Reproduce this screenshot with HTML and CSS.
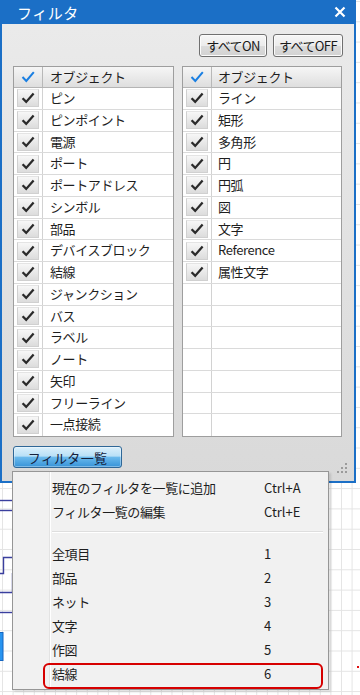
FILE: index.html
```html
<!DOCTYPE html>
<html lang="ja">
<head>
    <meta charset="UTF-8">
    <meta name="viewport" content="width=device-width, initial-scale=1.0">
    <title>フィルタ</title>
    <link rel="stylesheet" href="styles.css">
</head>
<body>
    <svg class="wires" width="360" height="695" viewBox="0 0 360 695">
        <path d="M0 500.5 H14" />
        <path d="M0 510.5 H14" />
        <path d="M0 573.5 H3.5 V557.5 H14" />
        <path d="M12.5 573 V592.5 H0" />
        <path d="M0 612.5 H14" />
        <rect class="blk" x="-1" y="632.5" width="4" height="28" />
        <rect class="dot" x="357" y="666" width="2" height="2" />
    </svg>

    <div class="window">
        <div class="titlebar">
            <span class="title">フィルタ</span>
            <svg class="close" width="12" height="12" viewBox="0 0 12 12">
                <path d="M1.5 1.5 L10.5 10.5 M10.5 1.5 L1.5 10.5" />
            </svg>
        </div>

        <div class="body">
            <div class="toolbar">
                <button class="btn">すべてON</button>
                <button class="btn">すべてOFF</button>
            </div>

            <div class="lists">
                <div class="list list-left" id="leftList">
                    <div class="row head">
                        <div class="chk"><svg class="bluechk" width="14" height="12" viewBox="0 0 14 12"><path d="M1.5 6 L5.3 10 L12.8 1.2" /></svg></div>
                        <div class="name">オブジェクト</div>
                    </div>
                </div>
                <div class="list list-right" id="rightList">
                    <div class="row head">
                        <div class="chk"><svg class="bluechk" width="14" height="12" viewBox="0 0 14 12"><path d="M1.5 6 L5.3 10 L12.8 1.2" /></svg></div>
                        <div class="name">オブジェクト</div>
                    </div>
                </div>
            </div>

            <button class="btn-blue">フィルタ一覧</button>

            <svg class="grip" width="12" height="12" viewBox="0 0 12 12">
                <rect x="9" y="1" width="2" height="2" />
                <rect x="5" y="5" width="2" height="2" />
                <rect x="9" y="5" width="2" height="2" />
                <rect x="1" y="9" width="2" height="2" />
                <rect x="5" y="9" width="2" height="2" />
                <rect x="9" y="9" width="2" height="2" />
            </svg>
        </div>
    </div>

    <div class="menu">
        <div class="item"><span>現在のフィルタを一覧に追加</span><span class="key">Ctrl+A</span></div>
        <div class="item"><span>フィルタ一覧の編集</span><span class="key">Ctrl+E</span></div>
        <div class="sep"></div>
        <div class="item"><span>全項目</span><span class="key">1</span></div>
        <div class="item"><span>部品</span><span class="key">2</span></div>
        <div class="item"><span>ネット</span><span class="key">3</span></div>
        <div class="item"><span>文字</span><span class="key">4</span></div>
        <div class="item"><span>作図</span><span class="key">5</span></div>
        <div class="item"><span>結線</span><span class="key">6</span></div>
        <div class="mark"></div>
    </div>

    <script>
        const leftItems = ['ピン', 'ピンポイント', '電源', 'ポート', 'ポートアドレス', 'シンボル', '部品',
            'デバイスブロック', '結線', 'ジャンクション', 'バス', 'ラベル', 'ノート', '矢印', 'フリーライン', '一点接続'];
        const rightItems = ['ライン', '矩形', '多角形', '円', '円弧', '図', '文字', 'Reference', '属性文字'];
        const tick = '<svg width="14" height="12" viewBox="0 0 14 12"><path d="M1.6 6.2 L5.2 9.9 L12.6 1.6" /></svg>';

        function fillList(id, items) {
            const list = document.getElementById(id);
            for (let i = 0; i < 16; i++) {
                const row = document.createElement('div');
                row.className = 'row';
                if (i < items.length) {
                    row.innerHTML = `<div class="chk"><span class="box">${tick}</span></div><div class="name">${items[i]}</div>`;
                } else {
                    row.innerHTML = '<div class="chk"></div><div class="name"></div>';
                }
                list.appendChild(row);
            }
        }

        fillList('leftList', leftItems);
        fillList('rightList', rightItems);
    </script>
</body>
</html>
```

FILE: styles.css
```css
body {
    margin: 0;
    width: 360px;
    height: 695px;
    position: relative;
    overflow: hidden;
    font-family: "Noto Sans CJK JP", "Noto Sans", sans-serif;
    font-size: 13px;
    color: #1e1e1e;
    background-color: #fff;
    background-image:
        linear-gradient(to right, #e4e4e4 1px, transparent 1px),
        linear-gradient(to bottom, #e4e4e4 1px, transparent 1px);
    background-size: 10.6px 20.3px;
    background-position: 2px 1px;
}

.wires {
    position: absolute;
    left: 0;
    top: 0;
}

.wires path {
    fill: none;
    stroke: #3a3f9e;
    stroke-width: 1.4;
}

.wires .blk {
    fill: #2894f0;
    stroke: #1565c0;
    stroke-width: 1;
}

.wires .dot {
    fill: #e01010;
}

.window {
    position: relative;
    width: 356px;
    height: 483px;
    box-sizing: border-box;
    border: 2px solid #1b6fc6;
    border-top: 0;
    background: linear-gradient(#ebebeb, #d9d9d9);
    display: flex;
    flex-direction: column;
}

.titlebar {
    height: 24px;
    margin: 0 -2px;
    background: #1b6fc6;
    color: #fff;
    display: flex;
    align-items: center;
    justify-content: space-between;
    padding: 0 10px 0 17px;
}

.title {
    font-size: 15px;
    letter-spacing: 0.5px;
}

.close path {
    stroke: #fff;
    stroke-width: 2.2;
}

.body {
    position: relative;
    flex: 1;
    padding: 10px 12px 0 11px;
}

.toolbar {
    display: flex;
    justify-content: flex-end;
    gap: 6px;
    margin-right: -1px;
}

.btn {
    height: 23px;
    padding: 0;
    font-family: inherit;
    font-size: 13px;
    color: #1a1a1a;
    letter-spacing: -0.6px;
    white-space: nowrap;
    border: 1px solid #707070;
    border-radius: 3px;
    background: linear-gradient(#f6f6f6 0%, #ececec 50%, #dcdcdc 51%, #d2d2d2 100%);
    box-shadow: inset 0 0 0 1px #fbfbfb;
}

.btn:first-child {
    width: 68px;
}

.btn:last-child {
    width: 70px;
}

.lists {
    display: flex;
    gap: 8px;
    margin-top: 9px;
}

.list {
    border: 1px solid #9e9e9e;
    background: #fff;
}

.list-left {
    width: 159px;
}

.list-right {
    width: 158px;
}

.row {
    display: flex;
    height: 21.75px;
    box-sizing: border-box;
    border-bottom: 1px solid #dadada;
}

.row:last-child {
    border-bottom: 0;
}

.row.head {
    height: 21px;
    background: linear-gradient(#f6f6f6, #dedede);
    border-bottom: 1px solid #b4b4b4;
}

.chk {
    width: 28px;
    flex: none;
    border-right: 1px solid #d2d2d2;
    display: flex;
    align-items: center;
    justify-content: center;
}

.head .chk {
    border-right-color: #b8b8b8;
}

.bluechk path {
    fill: none;
    stroke: #1a7fe2;
    stroke-width: 2;
}

.box {
    width: 22px;
    height: 18px;
    box-sizing: border-box;
    border: 1px solid #d0d0d0;
    border-top-color: #e4e4e4;
    background: linear-gradient(#f7f7f7, #dcdcdc);
    display: flex;
    align-items: center;
    justify-content: center;
}

.box path {
    fill: none;
    stroke: #2a2a2a;
    stroke-width: 2.3;
}

.name {
    padding-left: 7px;
    line-height: 20px;
    letter-spacing: -0.4px;
    white-space: nowrap;
}

.list-right .name {
    padding-left: 6px;
}

.btn-blue {
    margin-top: 9px;
    width: 109px;
    height: 22px;
    font-family: inherit;
    font-size: 13px;
    color: #16213c;
    letter-spacing: 0.3px;
    border: 1px solid #2f6797;
    border-radius: 3px;
    background: linear-gradient(#dcf0fb 0%, #b9e0f7 45%, #6ab9ec 52%, #3793d8 100%);
    box-shadow: inset 0 0 0 1px rgba(255, 255, 255, 0.35);
}

.grip {
    position: absolute;
    right: 6px;
    bottom: 7px;
}

.grip rect {
    fill: #9b9b9b;
}

.menu {
    position: absolute;
    left: 12px;
    top: 471px;
    width: 317px;
    height: 219px;
    box-sizing: border-box;
    border: 1px solid #969696;
    background: linear-gradient(to right, #f1f1f1 36px, #e3e3e3 36px, #e3e3e3 37px, #fff 37px, #fff 38px, #f1f1f1 38px);
    box-shadow: 2px 2px 2px rgba(0, 0, 0, 0.12);
    padding-top: 3px;
}

.item {
    display: flex;
    height: 24px;
    align-items: center;
    padding-left: 39px;
    letter-spacing: -0.4px;
}

.item span:first-child {
    width: 212px;
}

.key {
    letter-spacing: 0;
}

.sep {
    height: 18px;
    margin-left: 39px;
    margin-right: 5px;
    background: linear-gradient(transparent 8px, #dedede 8px, #dedede 9px, #fff 9px, #fff 10px, transparent 10px);
}

.mark {
    position: absolute;
    left: 30px;
    top: 191px;
    width: 280px;
    height: 26px;
    box-sizing: border-box;
    border: 2.5px solid #d60000;
    border-radius: 6px;
}
```
